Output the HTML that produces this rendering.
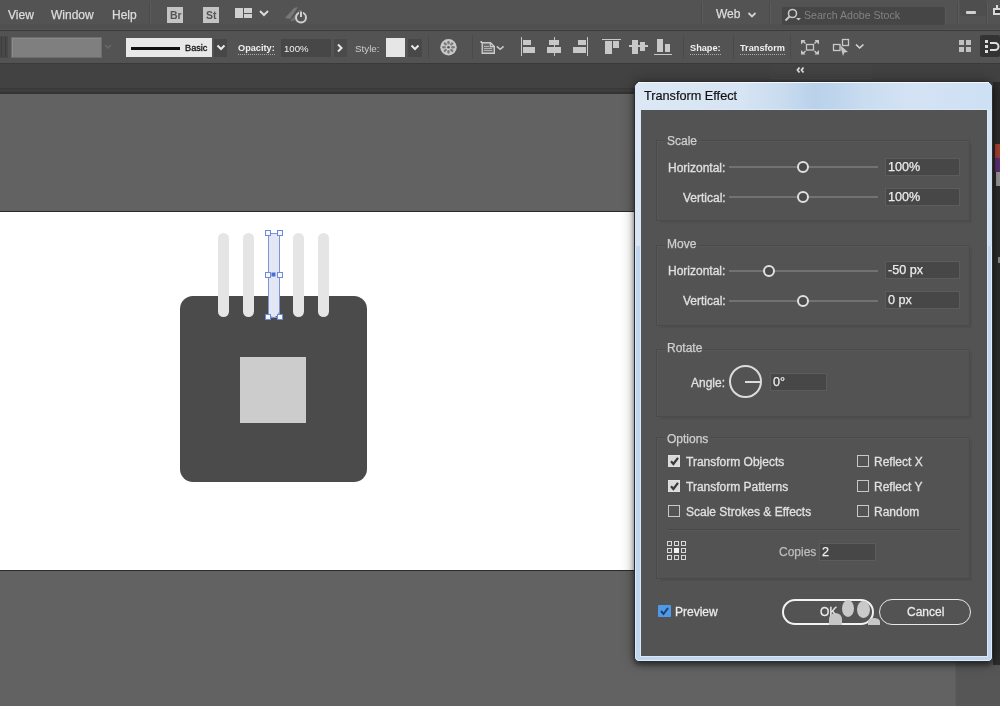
<!DOCTYPE html>
<html><head><meta charset="utf-8">
<style>
*{box-sizing:border-box;margin:0;padding:0}
html,body{width:1000px;height:706px;overflow:hidden;background:#626262;font-family:"Liberation Sans",sans-serif}
.t,.inp{will-change:transform}
.a{position:absolute}
.t{position:absolute;line-height:1;white-space:nowrap}
#menu{left:0;top:0;width:1000px;height:24px;background:#535353}
#menub{left:0;top:24px;width:1000px;height:6px;background:#4f4f4f;border-top:2px solid #505050;border-bottom:1px solid #555}
#menul{left:0;top:30px;width:1000px;height:1px;background:#3a3a3a}
#tool{left:0;top:31px;width:1000px;height:32px;background:#535353}
#strip{left:0;top:63px;width:1000px;height:31px;background:#424242}
#stripl{left:0;top:63px;width:1000px;height:1px;background:#3a3a3a}
#strip2{left:0;top:88px;width:1000px;height:6px;background:#3d3d3d;border-top:1px solid #383838;border-bottom:2px solid #343434}
#canvas{left:0;top:94px;width:1000px;height:612px;background:#626262}
.mt{color:#dcdcdc;font-size:12px;-webkit-text-stroke:0.25px #dcdcdc}
.sep{position:absolute;width:1px;background:#4a4a4a}
.sepl{position:absolute;width:1px;background:#5c5c5c}

.gb{position:absolute;border:1px solid #4a4a4a;box-shadow:1px 1px 0 #585858 inset,3px 3px 0 -1px #4e4e4e}
.gh{font-size:12px;color:#cfcfcf;background:#535353;padding:0 2px;-webkit-text-stroke:0.25px #cfcfcf}
.lb{font-size:12px;color:#e0e0e0;-webkit-text-stroke:0.3px #e0e0e0}
.trk{position:absolute;left:729px;width:149px;height:2px;background:#727272}
.knob{position:absolute;width:12px;height:12px;border:2px solid #e0e0e0;border-radius:50%;background:#4a4a4a}
.inp{position:absolute;height:18px;background:#474747;color:#ececec;font-size:12.6px;line-height:17px;padding-left:2px;white-space:nowrap;border:1px solid #5c5c5c;-webkit-text-stroke:0.25px #ececec}
.cb{position:absolute;width:12px;height:12px;border:1px solid #c8c8c8}
.cb.on{background:#d9d9d9;border-color:#e0e0e0}
.tb{font-size:9.2px;font-weight:bold;color:#f0f0f0;border-bottom:1px dotted #aaa;padding-bottom:1px}
.ic{position:absolute;background:#c8c8c8}
</style></head><body>
<div id="menu" class="a"></div>
<div id="menub" class="a"></div>
<div id="menul" class="a"></div>
<div id="tool" class="a"></div>
<div id="strip" class="a"></div>
<div id="stripl" class="a"></div>
<div id="strip2" class="a"></div>
<div id="canvas" class="a"></div>

<!-- menu -->
<div class="t mt" style="left:8px;top:9px">View</div>
<div class="t mt" style="left:51px;top:9px">Window</div>
<div class="t mt" style="left:112px;top:9px">Help</div>
<div class="sep" style="left:149px;top:3px;height:21px"></div>
<div class="sepl" style="left:150px;top:3px;height:21px"></div>
<div class="a" style="left:167px;top:7px;width:16px;height:16px;background:#c4c4c4"></div>
<div class="t" style="left:169.5px;top:10px;font-size:10.5px;font-weight:bold;color:#555">Br</div>
<div class="a" style="left:203px;top:7px;width:16px;height:16px;background:#c4c4c4"></div>
<div class="t" style="left:206px;top:10px;font-size:10.5px;font-weight:bold;color:#555">St</div>
<div class="a" style="left:235px;top:8px;width:8px;height:10px;background:#d0d0d0"></div>
<div class="a" style="left:244px;top:8px;width:8px;height:4.5px;background:#d0d0d0"></div>
<div class="a" style="left:244px;top:13.5px;width:8px;height:4.5px;background:#d0d0d0"></div>
<svg class="a" style="left:258px;top:9px" width="12" height="8"><path d="M2 2 L6 6 L10 2" fill="none" stroke="#dcdcdc" stroke-width="2"/></svg>
<svg class="a" style="left:282px;top:4px" width="26" height="22" viewBox="0 0 26 22">
<path d="M3 14 L12 4 L16 3 L8 15 Z" fill="#777"/><path d="M8 17 L17 6 L20 6 L12 17Z" fill="#6f6f6f"/>
<circle cx="19" cy="13.5" r="5" fill="none" stroke="#cfcfcf" stroke-width="2"/><path d="M19 7 V13" stroke="#535353" stroke-width="4"/><path d="M19 7.5 V13" stroke="#cfcfcf" stroke-width="2"/>
</svg>

<div class="sep" style="left:701px;top:3px;height:21px"></div>
<div class="sepl" style="left:702px;top:3px;height:21px"></div>
<div class="t mt" style="left:715.5px;top:7.5px">Web</div>
<svg class="a" style="left:746px;top:11px" width="12" height="8"><path d="M2.5 2 L6 5.5 L9.5 2" fill="none" stroke="#d0d0d0" stroke-width="1.8"/></svg>
<div class="sep" style="left:769px;top:3px;height:21px"></div>
<div class="sepl" style="left:770px;top:3px;height:21px"></div>
<div class="a" style="left:782px;top:6.5px;width:164px;height:18px;background:#464646;border-radius:2px;border-right:1px solid #5a5a5a"></div>
<svg class="a" style="left:784px;top:7px" width="18" height="16" viewBox="0 0 18 16">
<circle cx="8.5" cy="6.5" r="4" fill="none" stroke="#c8c8c8" stroke-width="1.6"/><path d="M5.5 9.5 L1.5 13.5" stroke="#c8c8c8" stroke-width="2"/><path d="M12 11 L17 11 L14.5 13.5Z" fill="#c8c8c8"/>
</svg>
<div class="t" style="left:804px;top:10px;font-size:10.6px;color:#828282">Search Adobe Stock</div>
<div class="sep" style="left:957px;top:3px;height:21px"></div>
<div class="sepl" style="left:958px;top:3px;height:21px"></div>
<div class="a" style="left:960px;top:0;width:26px;height:16px;background:#4e4e4e;border-radius:0 0 3px 3px"></div>
<div class="a" style="left:966px;top:11px;width:10px;height:3px;background:#d0d0d0;border-radius:1px"></div>
<div class="sep" style="left:986px;top:3px;height:21px"></div>
<div class="sepl" style="left:987px;top:3px;height:21px"></div>
<div class="a" style="left:993px;top:8px;width:9px;height:7px;border:2px solid #d8d8d8;background:#3a3a3a"></div>
<div class="a" style="left:996px;top:5px;width:2px;height:4px;background:#d8d8d8"></div>

<!-- toolbar -->
<div class="a" style="left:0;top:36px;width:8px;height:22px;background:#484848"></div>
<div class="a" style="left:1px;top:37px;width:1px;height:20px;background:#3c3c3c"></div>
<div class="a" style="left:5px;top:37px;width:1px;height:20px;background:#3c3c3c"></div>
<div class="a" style="left:11px;top:36.5px;width:91px;height:21.5px;background:#7f7f7f;border:1px solid #6c6c6c;box-shadow:inset 1px 1px 0 #8a8a8a"></div>
<svg class="a" style="left:102px;top:43px" width="12" height="8"><path d="M3 2 L6 5 L9 2" fill="none" stroke="#6a6a6a" stroke-width="1.5"/></svg>
<div class="a" style="left:126px;top:38px;width:86px;height:19px;background:#e8e8e8"></div>
<div class="a" style="left:131px;top:46.5px;width:49px;height:3px;background:#111"></div>
<div class="t" style="left:185px;top:43.8px;font-size:9.2px;color:#111;-webkit-text-stroke:0.3px #111">Basic</div>
<div class="a" style="left:214px;top:39px;width:13px;height:18px;background:#474747"></div>
<svg class="a" style="left:214.5px;top:44px" width="12" height="8"><path d="M2.5 1.5 L6 5 L9.5 1.5" fill="none" stroke="#e8e8e8" stroke-width="2"/></svg>
<div class="t tb" style="left:237.5px;top:43.5px">Opacity:</div>
<div class="a" style="left:281px;top:39px;width:50px;height:18px;background:#474747"></div>
<div class="t" style="left:284px;top:43.5px;font-size:9.6px;color:#f0f0f0">100%</div>
<div class="a" style="left:334px;top:39px;width:13px;height:18px;background:#4a4a4a"></div>
<svg class="a" style="left:335px;top:42px" width="10" height="12"><path d="M3 2.5 L6.5 6 L3 9.5" fill="none" stroke="#e8e8e8" stroke-width="2"/></svg>
<div class="t" style="left:355px;top:43.5px;font-size:9.8px;color:#cdcdcd">Style:</div>
<div class="a" style="left:386px;top:38px;width:19px;height:19px;background:#e6e6e6"></div>
<div class="a" style="left:408px;top:39px;width:14px;height:18px;background:#484848"></div>
<svg class="a" style="left:409px;top:44px" width="12" height="8"><path d="M2.5 1.5 L6 5 L9.5 1.5" fill="none" stroke="#e8e8e8" stroke-width="2"/></svg>
<div class="sep" style="left:428px;top:35px;height:24px"></div>
<svg class="a" style="left:438px;top:37px" width="21" height="21" viewBox="438 37 21 21">
<circle cx="448.5" cy="47.2" r="8.2" fill="#cacaca"/><g fill="#7c7c7c"><ellipse cx="453.10" cy="47.20" rx="1.3" ry="1.9" transform="rotate(90 453.10 47.20)"/><ellipse cx="451.75" cy="50.45" rx="1.3" ry="1.9" transform="rotate(135 451.75 50.45)"/><ellipse cx="448.50" cy="51.80" rx="1.3" ry="1.9" transform="rotate(180 448.50 51.80)"/><ellipse cx="445.25" cy="50.45" rx="1.3" ry="1.9" transform="rotate(225 445.25 50.45)"/><ellipse cx="443.90" cy="47.20" rx="1.3" ry="1.9" transform="rotate(270 443.90 47.20)"/><ellipse cx="445.25" cy="43.95" rx="1.3" ry="1.9" transform="rotate(315 445.25 43.95)"/><ellipse cx="448.50" cy="42.60" rx="1.3" ry="1.9" transform="rotate(360 448.50 42.60)"/><ellipse cx="451.75" cy="43.95" rx="1.3" ry="1.9" transform="rotate(405 451.75 43.95)"/></g><circle cx="448.5" cy="47.2" r="1.3" fill="#555"/>
</svg>
<div class="sep" style="left:472px;top:35px;height:24px"></div>
<svg class="a" style="left:479px;top:38px" width="28" height="18" viewBox="479 38 28 18">
<path d="M482.2 42.7 H490.5 L494.3 46.5 V53.3 H482.2 Z" fill="#6a6a6a" stroke="#cacaca" stroke-width="1.4"/>
<path d="M490.3 42.7 V46.7 H494.3" fill="none" stroke="#cacaca" stroke-width="1.2"/>
<g stroke="#b0b0b0" stroke-width="1"><path d="M484 46.5 H489"/><path d="M484 48.5 H492"/><path d="M484 50.5 H492"/></g>
<circle cx="481.3" cy="42" r="0.9" fill="#e0e0e0"/>
<path d="M496.8 46.3 L500.2 49.3 L503.6 46.3" fill="none" stroke="#c8c8c8" stroke-width="1.6"/>
</svg>
<!-- align icons -->
<div class="ic" style="left:520.5px;top:37px;width:1.5px;height:19px"></div>
<div class="ic" style="left:522.5px;top:40px;width:8.5px;height:5px"></div>
<div class="ic" style="left:522.5px;top:47px;width:12.5px;height:5.5px"></div>
<div class="ic" style="left:553.5px;top:37px;width:1.5px;height:19px"></div>
<div class="ic" style="left:549px;top:40px;width:10px;height:5px"></div>
<div class="ic" style="left:547px;top:47px;width:13.5px;height:5.5px"></div>
<div class="ic" style="left:586.5px;top:37px;width:1.5px;height:19px"></div>
<div class="ic" style="left:578px;top:40px;width:8px;height:5px"></div>
<div class="ic" style="left:573px;top:47px;width:13px;height:5.5px"></div>

<div class="ic" style="left:601.5px;top:38.5px;width:19px;height:1.5px"></div>
<div class="ic" style="left:604.5px;top:40.5px;width:7.5px;height:13.5px"></div>
<div class="ic" style="left:613px;top:40.5px;width:5.5px;height:7.5px"></div>
<div class="ic" style="left:629px;top:45px;width:19px;height:1.5px"></div>
<div class="ic" style="left:632px;top:39.5px;width:5.5px;height:14px"></div>
<div class="ic" style="left:639.5px;top:42px;width:5.5px;height:9px"></div>
<div class="ic" style="left:654px;top:53.5px;width:18px;height:1.5px"></div>
<div class="ic" style="left:657px;top:39px;width:5.5px;height:13px"></div>
<div class="ic" style="left:664.5px;top:44px;width:5.5px;height:8px"></div>
<div class="sep" style="left:683px;top:35px;height:24px"></div>
<div class="t tb" style="left:690px;top:43.5px">Shape:</div>
<div class="sep" style="left:733px;top:35px;height:24px"></div>
<div class="t tb" style="left:740px;top:43.5px">Transform</div>
<div class="sep" style="left:790px;top:35px;height:24px"></div>
<svg class="a" style="left:799px;top:38px" width="22" height="18" viewBox="799 38 22 18">
<rect x="806.5" y="44.5" width="7" height="5.5" fill="none" stroke="#c8c8c8" stroke-width="1.3"/>
<g fill="#c8c8c8"><path d="M801 40 H805.5 L804.3 41.2 L806 43 L805 44 L803.2 42.3 L801 44.5Z"/>
<path d="M819 40 H814.5 L815.7 41.2 L814 43 L815 44 L816.8 42.3 L819 44.5Z"/>
<path d="M801 54.5 H805.5 L804.3 53.3 L806 51.5 L805 50.5 L803.2 52.2 L801 50Z"/>
<path d="M819 54.5 H814.5 L815.7 53.3 L814 51.5 L815 50.5 L816.8 52.2 L819 50Z"/></g>
</svg>
<svg class="a" style="left:831px;top:37px" width="36" height="20" viewBox="831 37 36 20">
<rect x="833.5" y="44.5" width="6.5" height="6" fill="none" stroke="#c8c8c8" stroke-width="1.3"/>
<rect x="842.5" y="39.5" width="6" height="6" fill="none" stroke="#c8c8c8" stroke-width="1.3"/>
<path d="M840 45 L848 52 L844.5 52.5 L843 56 Z" fill="#c4c4c4"/>
<path d="M856 44.5 L859.7 48 L863.4 44.5" fill="none" stroke="#d8d8d8" stroke-width="1.6"/>
</svg>
<svg class="a" style="left:958px;top:39px" width="15" height="15" viewBox="0 0 15 15">
<g fill="#c0c0c0"><rect x="1" y="1" width="5" height="5"/><rect x="8" y="1" width="5" height="5"/><rect x="1" y="8" width="5" height="5"/><rect x="8" y="8" width="5" height="5"/></g>
</svg>
<div class="a" style="left:980px;top:35px;width:20px;height:22px;background:#333;border-radius:2px"></div>
<g></g>
<div class="a" style="left:985px;top:40px;width:3px;height:3px;background:#ddd"></div>
<div class="a" style="left:985px;top:45px;width:3px;height:3px;background:#ddd"></div>
<div class="a" style="left:985px;top:50px;width:3px;height:3px;background:#ddd"></div>
<svg class="a" style="left:989px;top:40px" width="11" height="14"><path d="M1 3 H6 A3.5 3.5 0 0 1 6 10 H1" fill="none" stroke="#ddd" stroke-width="2"/></svg>
<div class="a" style="left:771px;top:64px;width:101px;height:15px;background:#434343;border-bottom:1px solid #4a4a4a"></div>
<svg class="a" style="left:796px;top:66px" width="10" height="8"><path d="M3.5 1.5 L1.5 4 L3.5 6.5 M7.5 1.5 L5.5 4 L7.5 6.5" fill="none" stroke="#e0e0e0" stroke-width="1.8"/></svg>

<!-- artboard -->
<div class="a" style="left:0;top:211px;width:635px;height:1px;background:#2a2a2a"></div>
<div class="a" style="left:0;top:212px;width:635px;height:358px;background:#fff"></div>
<div class="a" style="left:0;top:570px;width:635px;height:1px;background:#2a2a2a"></div>

<!-- shapes -->
<div class="a" style="left:180px;top:296px;width:186.5px;height:186.3px;background:#4b4b4b;border-radius:13px"></div>
<div class="a" style="left:240px;top:357px;width:66px;height:66px;background:#cccccc"></div>
<div class="a" style="left:218px;top:233px;width:11px;height:84px;background:#e5e5e5;border-radius:5.5px"></div>
<div class="a" style="left:243px;top:233px;width:11px;height:84px;background:#e5e5e5;border-radius:5.5px"></div>
<div class="a" style="left:268px;top:233px;width:11px;height:84px;background:#e3e6f3;border-radius:5.5px"></div>
<svg class="a" style="left:262px;top:227px" width="24" height="97" viewBox="262 227 24 97">
<rect x="268.5" y="233.5" width="11" height="84" fill="none" stroke="#7d94dc" stroke-width="1"/>
<g fill="#f6f8ff" stroke="#6f89d8" stroke-width="1">
<rect x="265.5" y="230.5" width="5" height="5"/><rect x="277.5" y="230.5" width="5" height="5"/>
<rect x="265.5" y="272.5" width="5" height="5"/><rect x="277.5" y="272.5" width="5" height="5"/>
<rect x="265.5" y="314.5" width="5" height="5"/><rect x="277.5" y="314.5" width="5" height="5"/>
</g>
<rect x="271.5" y="272.5" width="4" height="4" fill="#4a6fd4"/>
</svg>
<div class="a" style="left:293px;top:233px;width:11px;height:84px;background:#e5e5e5;border-radius:5.5px"></div>
<div class="a" style="left:318px;top:233px;width:11px;height:84px;background:#e5e5e5;border-radius:5.5px"></div>

<!-- right panels -->
<div class="a" style="left:955px;top:94px;width:45px;height:612px;background:#565656"></div>
<div class="a" style="left:955px;top:94px;width:1px;height:612px;background:#5d5d5d"></div>
<div class="a" style="left:993px;top:82px;width:7px;height:583px;background:#2c2c2c"></div>
<div class="a" style="left:995px;top:144px;width:5px;height:14px;background:#a8402f"></div>
<div class="a" style="left:995px;top:158px;width:5px;height:14px;background:#5b2f78"></div>
<div class="a" style="left:996px;top:172px;width:4px;height:14px;background:#979797"></div>
<div class="a" style="left:998px;top:257px;width:2px;height:6px;background:#8a8a8a"></div>

<!-- dialog -->
<div class="a" style="left:634px;top:81px;width:359px;height:581px;background:#c0d5ee;border-radius:7px 7px 5px 5px;border:1px solid #2c2c2c;box-shadow:0 3px 5px rgba(0,0,0,0.45),0 0 14px rgba(0,0,0,0.35)"></div>
<div class="a" style="left:635px;top:82px;width:357px;height:579px;border:1px solid rgba(235,243,252,0.7);border-radius:6px 6px 4px 4px"></div>
<div class="a" style="left:635px;top:82px;width:357px;height:28px;border-radius:6px 6px 0 0;background:linear-gradient(90deg,#dce8f5 0%,#d6e4f3 30%,#c8dbef 42%,#b9d2ea 50%,#bcd4ec 55%,#c9dcf0 64%,#d4e3f4 78%,#cde0f4 100%)"></div>
<div class="a" style="left:638px;top:82px;width:351px;height:1px;background:#f4f8fc"></div>
<div class="a" style="left:635px;top:110px;width:6px;height:136px;background:linear-gradient(#dce8f5,#d8e5f4)"></div>
<div class="a" style="left:987px;top:110px;width:5px;height:136px;background:linear-gradient(#d4e3f3,#d0e0f2)"></div>
<div class="a" style="left:640px;top:109px;width:348px;height:548px;border:1px solid #dbe7f5;box-shadow:inset 0 0 0 1px #58616b"></div>
<div class="a" style="left:641px;top:110px;width:346px;height:546px;background:#535353"></div>
<div class="t" style="left:643.5px;top:90px;font-size:12.7px;color:#111;-webkit-text-stroke:0.2px #111">Transform Effect</div>

<!-- groups -->
<div class="gb" style="left:656px;top:140px;width:314px;height:81px"></div>
<div class="gb" style="left:656px;top:245px;width:314px;height:81px"></div>
<div class="gb" style="left:656px;top:349px;width:314px;height:68px"></div>
<div class="gb" style="left:656px;top:437px;width:314px;height:142px"></div>

<div class="t gh" style="left:664.5px;top:135px">Scale</div>
<div class="t lb" style="left:668px;top:162px">Horizontal:</div>
<div class="trk" style="top:166px"></div>
<div class="knob" style="left:797px;top:161px"></div>
<div class="inp" style="left:885px;top:158px;width:75px">100%</div>
<div class="t lb" style="left:683px;top:192px">Vertical:</div>
<div class="trk" style="top:196px"></div>
<div class="knob" style="left:797px;top:191px"></div>
<div class="inp" style="left:885px;top:188px;width:75px">100%</div>

<div class="t gh" style="left:665px;top:238px">Move</div>
<div class="t lb" style="left:668px;top:265px">Horizontal:</div>
<div class="trk" style="top:270px"></div>
<div class="knob" style="left:763px;top:265px"></div>
<div class="inp" style="left:885px;top:261px;width:75px">-50 px</div>
<div class="t lb" style="left:683px;top:295px">Vertical:</div>
<div class="trk" style="top:300px"></div>
<div class="knob" style="left:797px;top:295px"></div>
<div class="inp" style="left:885px;top:291px;width:75px">0 px</div>

<div class="t gh" style="left:665px;top:342px">Rotate</div>
<div class="t lb" style="left:691px;top:377px">Angle:</div>
<div class="a" style="left:729px;top:365px;width:33px;height:33px;border:2px solid #dcdcdc;border-radius:50%"></div>
<div class="a" style="left:745px;top:381px;width:16px;height:2px;background:#dcdcdc"></div>
<div class="inp" style="left:770px;top:373px;width:57px">0°</div>

<div class="t gh" style="left:665px;top:433px">Options</div>
<div class="cb on" style="left:668px;top:455px"></div><svg class="a" style="left:668px;top:455px" width="12" height="12"><path d="M3 6.2 L5.4 9 L10 2.8" fill="none" stroke="#383838" stroke-width="2.2"/></svg>
<div class="t lb" style="left:686px;top:456px">Transform Objects</div>
<div class="cb on" style="left:668px;top:480px"></div><svg class="a" style="left:668px;top:480px" width="12" height="12"><path d="M3 6.2 L5.4 9 L10 2.8" fill="none" stroke="#383838" stroke-width="2.2"/></svg>
<div class="t lb" style="left:686px;top:481px">Transform Patterns</div>
<div class="cb" style="left:668px;top:505px"></div>
<div class="t lb" style="left:686px;top:506px">Scale Strokes &amp; Effects</div>
<div class="cb" style="left:857px;top:455px"></div>
<div class="t lb" style="left:874px;top:456px">Reflect X</div>
<div class="cb" style="left:857px;top:480px"></div>
<div class="t lb" style="left:874px;top:481px">Reflect Y</div>
<div class="cb" style="left:857px;top:505px"></div>
<div class="t lb" style="left:874px;top:506px">Random</div>
<div class="a" style="left:668px;top:529px;width:292px;height:1px;background:#474747"></div>
<div class="a" style="left:668px;top:530px;width:292px;height:1px;background:#5a5a5a"></div>
<svg class="a" style="left:666px;top:540px" width="22" height="21" viewBox="0 0 22 21">
<g fill="none" stroke="#d8d8d8" stroke-width="1">
<rect x="1.5" y="1.5" width="4" height="4"/><rect x="8.5" y="1.5" width="4" height="4"/><rect x="15.5" y="1.5" width="4" height="4"/>
<rect x="1.5" y="8.5" width="4" height="4"/><rect x="15.5" y="8.5" width="4" height="4"/>
<rect x="1.5" y="15.5" width="4" height="4"/><rect x="8.5" y="15.5" width="4" height="4"/><rect x="15.5" y="15.5" width="4" height="4"/>
</g><rect x="8" y="8" width="5" height="5" fill="#f0f0f0"/>
</svg>
<div class="t lb" style="left:779px;top:546px;color:#bdbdbd;-webkit-text-stroke:0.25px #bdbdbd">Copies</div>
<div class="inp" style="left:819px;top:543px;width:57px">2</div>

<div class="a" style="left:658px;top:605px;width:13px;height:12px;background:#4e9ae8;border-radius:1px"></div>
<svg class="a" style="left:658px;top:605px" width="13" height="12"><path d="M3 6 L5.5 9 L10 3" fill="none" stroke="#1d3f6a" stroke-width="2"/></svg>
<div class="t lb" style="left:675px;top:606px;color:#f2f2f2">Preview</div>

<div class="a" style="left:782px;top:599px;width:92px;height:26px;border:2px solid #f2f2f2;border-radius:13px"></div>
<div class="t lb" style="left:820px;top:606px;color:#f4f4f4">OK</div>
<div class="a" style="left:879px;top:599px;width:92px;height:26px;border:1.5px solid #e8e8e8;border-radius:13px"></div>
<div class="t lb" style="left:907px;top:606px;color:#f0f0f0">Cancel</div>
<div class="a" style="left:842px;top:600px;width:12px;height:17px;border-radius:50%;background:#c9c9c9"></div>
<div class="a" style="left:857px;top:601px;width:12.5px;height:17px;border-radius:50%;background:#c9c9c9"></div>
<div class="a" style="left:829px;top:613px;width:13px;height:12px;border-radius:50% 50% 0 0;background:#c6c6c6"></div>
<div class="a" style="left:868px;top:618px;width:12px;height:7px;border-radius:50% 50% 0 0;background:#c6c6c6"></div>


</body></html>
